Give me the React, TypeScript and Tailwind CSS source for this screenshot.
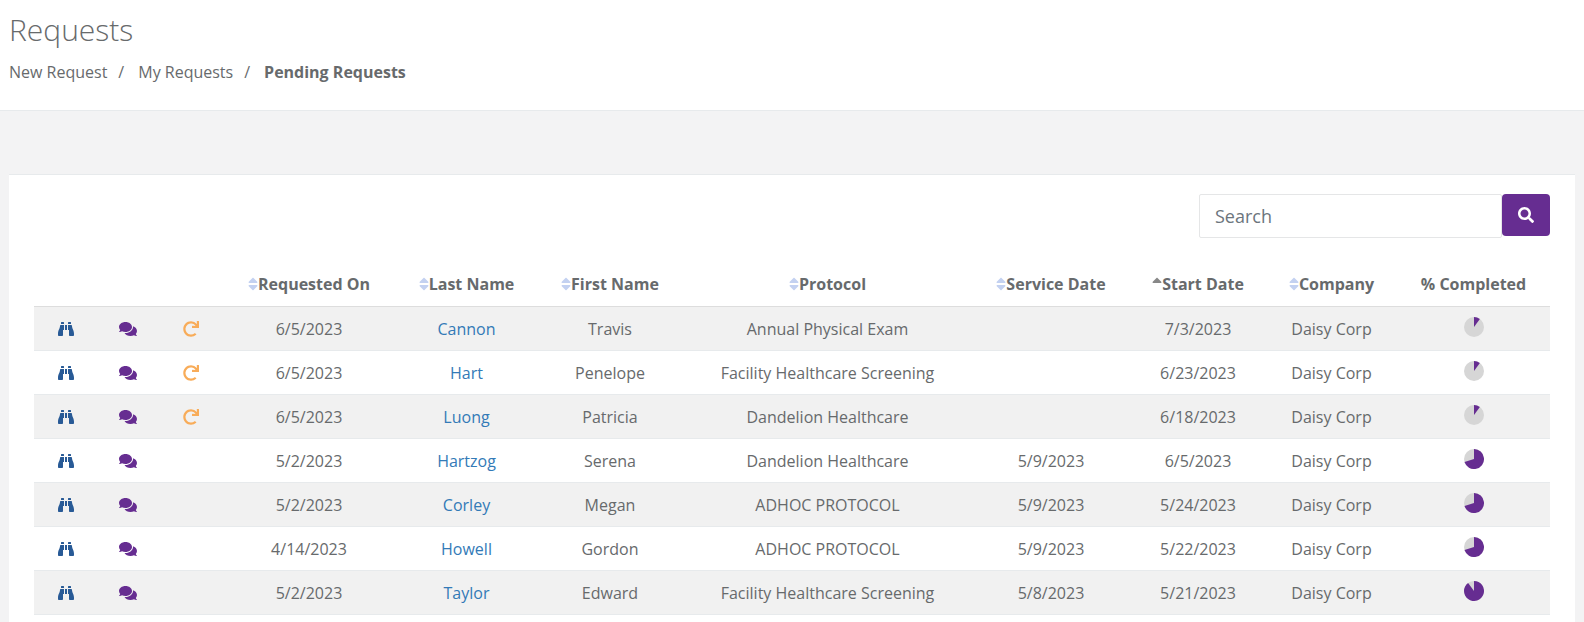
import { useState } from 'react';
import { FaBinoculars, FaComments, FaRedo, FaSearch, FaSort, FaSortUp } from 'react-icons/fa';
import clsx from 'clsx';

interface PendingRequest {
  requestedOn: string;
  lastName: string;
  firstName: string;
  protocol: string;
  serviceDate: string;
  startDate: string;
  company: string;
  completed: number;
  canResend?: boolean;
}

const requests: PendingRequest[] = [
  { requestedOn: '6/5/2023', lastName: 'Cannon', firstName: 'Travis', protocol: 'Annual Physical Exam', serviceDate: '', startDate: '7/3/2023', company: 'Daisy Corp', completed: 10, canResend: true },
  { requestedOn: '6/5/2023', lastName: 'Hart', firstName: 'Penelope', protocol: 'Facility Healthcare Screening', serviceDate: '', startDate: '6/23/2023', company: 'Daisy Corp', completed: 10, canResend: true },
  { requestedOn: '6/5/2023', lastName: 'Luong', firstName: 'Patricia', protocol: 'Dandelion Healthcare', serviceDate: '', startDate: '6/18/2023', company: 'Daisy Corp', completed: 10, canResend: true },
  { requestedOn: '5/2/2023', lastName: 'Hartzog', firstName: 'Serena', protocol: 'Dandelion Healthcare', serviceDate: '5/9/2023', startDate: '6/5/2023', company: 'Daisy Corp', completed: 70 },
  { requestedOn: '5/2/2023', lastName: 'Corley', firstName: 'Megan', protocol: 'ADHOC PROTOCOL', serviceDate: '5/9/2023', startDate: '5/24/2023', company: 'Daisy Corp', completed: 70 },
  { requestedOn: '4/14/2023', lastName: 'Howell', firstName: 'Gordon', protocol: 'ADHOC PROTOCOL', serviceDate: '5/9/2023', startDate: '5/22/2023', company: 'Daisy Corp', completed: 70 },
  { requestedOn: '5/2/2023', lastName: 'Taylor', firstName: 'Edward', protocol: 'Facility Healthcare Screening', serviceDate: '5/8/2023', startDate: '5/21/2023', company: 'Daisy Corp', completed: 90 },
];

const columns = [
  { name: 'Requested On', width: 'w-[174px]' },
  { name: 'Last Name', width: 'w-[141px]' },
  { name: 'First Name', width: 'w-[146px]' },
  { name: 'Protocol', width: 'w-[289px]' },
  { name: 'Service Date', width: 'w-[158px]' },
  { name: 'Start Date', width: 'w-[136px]', sorted: true },
  { name: 'Company', width: 'w-[131px]' },
];

function Pie({ value }: { value: number }) {
  const angle = (value / 100) * 2 * Math.PI;
  const x = 10 + 10 * Math.sin(angle);
  const y = 10 - 10 * Math.cos(angle);

  return (
    <svg viewBox="0 0 20 20" className="w-5 h-5 mx-auto mb-1" role="img">
      <circle cx="10" cy="10" r="10" fill="#d6d6d6" />
      <path d={`M10 10V0A10 10 0 ${value > 50 ? 1 : 0} 1 ${x} ${y}Z`} fill="#662d91" />
    </svg>
  );
}

function Header() {
  return (
    <header className="bg-white border-b border-[#e7eaec] px-[9px] pt-3 pb-[26px]">
      <h1 className="text-[30px] leading-9 font-light">Requests</h1>
      <nav className="mt-3">
        <ol className="flex leading-6">
          <li><a href="#new">New Request</a></li>
          <li className="before:content-['/'] before:pl-[11px] before:pr-[14px]"><a href="#mine">My Requests</a></li>
          <li className="before:content-['/'] before:pl-[11px] before:pr-[14px]"><a href="#pending" className="font-bold">Pending Requests</a></li>
        </ol>
      </nav>
    </header>
  );
}

export default function App() {
  const [search, setSearch] = useState('');

  const rows = requests.filter((r) =>
    `${r.firstName} ${r.lastName} ${r.protocol} ${r.company}`.toLowerCase().includes(search.toLowerCase())
  );

  return (
    <div className="min-h-screen flex flex-col bg-[#f3f3f4] text-[#676a6c] text-base font-['Open_Sans',sans-serif]">
      <Header />

      <main className="flex-1 flex flex-col px-[9px] pt-[63px]">
        <div className="flex-1 bg-white border-t border-[#e7eaec] px-[25px] pt-[19px]">
          <form className="flex justify-end items-start" onSubmit={(e) => e.preventDefault()}>
            <input
              type="text"
              aria-label="Search"
              placeholder="Search"
              value={search}
              onChange={(e) => setSearch(e.target.value)}
              className="w-[303px] h-11 px-[15px] border border-[#e5e6e7] rounded-xs bg-white text-lg outline-none placeholder:text-[#6c757d]"
            />
            <button type="submit" aria-label="Submit search" className="w-12 h-[42px] flex items-center justify-center rounded bg-[#662d91] text-white">
              <FaSearch />
            </button>
          </form>

          <table className="mt-6 w-full table-fixed border-separate border-spacing-0 text-center">
            <thead>
              <tr className="h-[45px] *:border-b *:border-[#dddddd]">
                <th className="w-[63px]" />
                <th className="w-[62px]" />
                <th className="w-[63px]" />
                {columns.map((col) => (
                  <th key={col.name} className={col.width}>
                    <button type="button" className="inline-flex items-center align-top font-bold whitespace-nowrap">
                      {col.sorted ? (
                        <FaSortUp className="w-[10px] text-[#888888]" />
                      ) : (
                        <FaSort className="w-[10px] text-[#c3d1f1]" />
                      )}
                      {col.name}
                    </button>
                  </th>
                ))}
                <th className="w-[153px]">% Completed</th>
              </tr>
            </thead>
            <tbody>
              {rows.map((r, i) => (
                <tr key={r.lastName} className={clsx('h-11 *:border-b *:border-[#e7eaec]', i % 2 === 0 && 'bg-[#f1f1f1]')}>
                  <td>
                    <button type="button" aria-label="View" className="block mx-auto text-[#285a96]"><FaBinoculars /></button>
                  </td>
                  <td>
                    <button type="button" aria-label="Comments" className="block mx-auto text-[#662d91]"><FaComments className="w-[18px]" /></button>
                  </td>
                  <td>
                    {r.canResend && (
                      <button type="button" aria-label="Resend" className="block mx-auto text-[#f8ac59]"><FaRedo /></button>
                    )}
                  </td>
                  <td>{r.requestedOn}</td>
                  <td><a href="#request" className="text-[#337ab7]">{r.lastName}</a></td>
                  <td>{r.firstName}</td>
                  <td>{r.protocol}</td>
                  <td>{r.serviceDate}</td>
                  <td>{r.startDate}</td>
                  <td>{r.company}</td>
                  <td><Pie value={r.completed} /></td>
                </tr>
              ))}
            </tbody>
          </table>
        </div>
      </main>
    </div>
  );
}
